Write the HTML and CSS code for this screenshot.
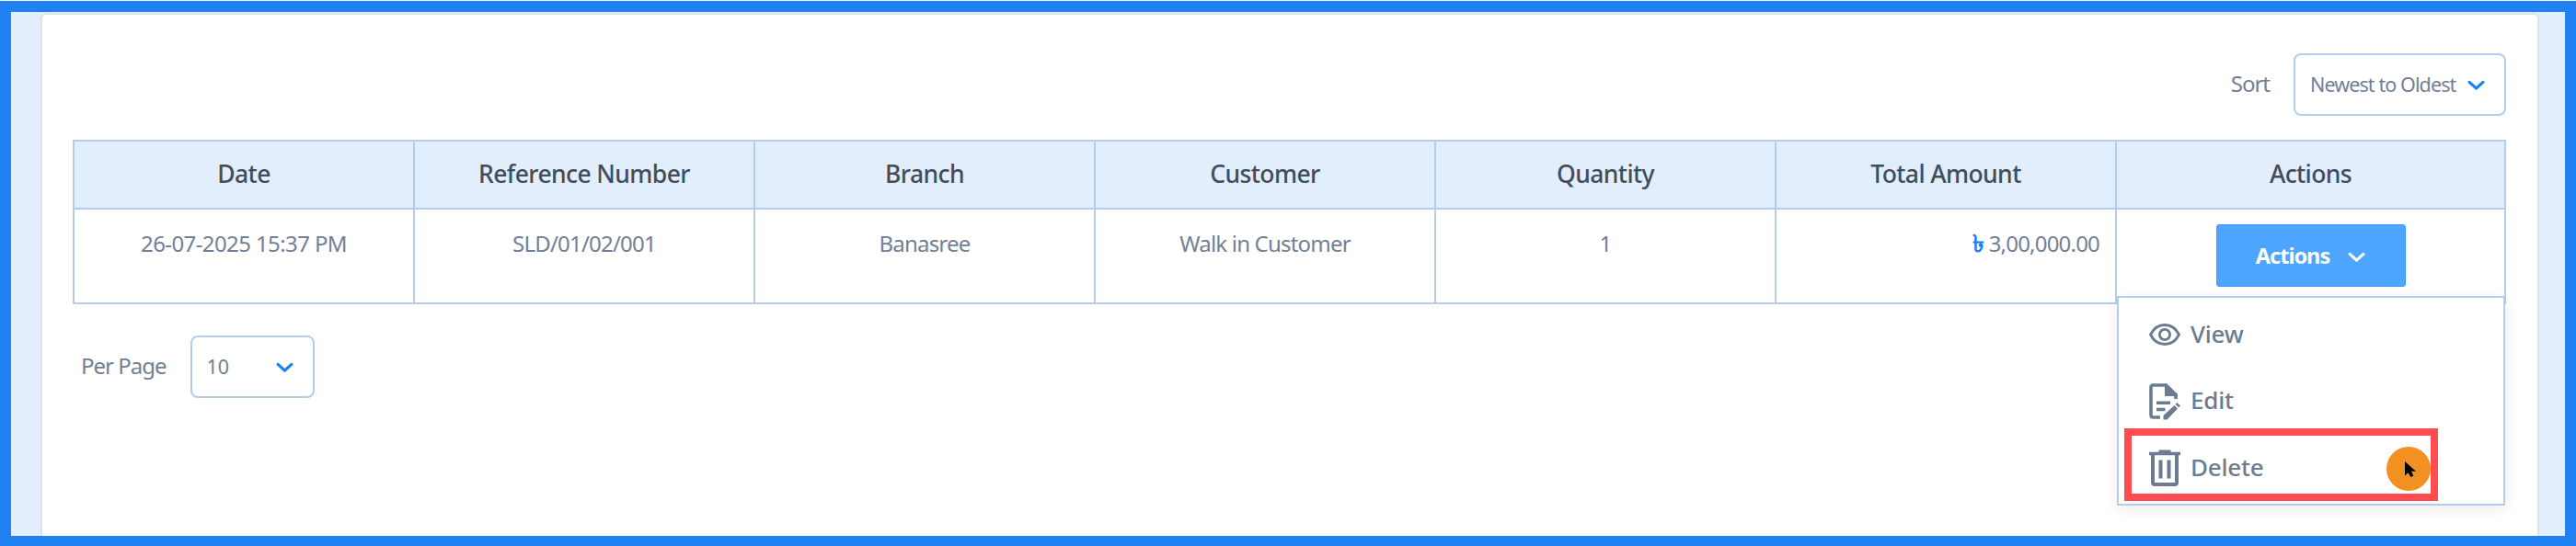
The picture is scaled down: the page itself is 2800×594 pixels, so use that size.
FILE: index.html
```html
<!DOCTYPE html>
<html lang="en">
<head>
    <meta charset="UTF-8">
    <meta name="viewport" content="width=device-width, initial-scale=1.0">
    <title>Sales List</title>
    <link rel="stylesheet" href="styles.css">
</head>
<body>

<div class="frame">
    <div class="card">
        <div class="toolbar">
            <span class="label">Sort</span>
            <div class="select select-sort">
                <span>Newest to Oldest</span>
                <svg class="chevron" viewBox="0 0 18 11"><path d="M2 2l7 6.5L16 2"/></svg>
            </div>
        </div>

        <table class="sales">
            <thead>
                <tr>
                    <th>Date</th>
                    <th>Reference Number</th>
                    <th>Branch</th>
                    <th>Customer</th>
                    <th>Quantity</th>
                    <th>Total Amount</th>
                    <th class="col-actions">Actions</th>
                </tr>
            </thead>
            <tbody>
                <tr>
                    <td class="date">26-07-2025 15:37 PM</td>
                    <td>SLD/01/02/001</td>
                    <td>Banasree</td>
                    <td>Walk in Customer</td>
                    <td>1</td>
                    <td class="amount"><span class="currency">৳</span> 3,00,000.00</td>
                    <td class="actions">
                        <button class="btn" type="button">
                            <span>Actions</span>
                            <svg class="chevron" viewBox="0 0 18 11"><path d="M2 2l7 6.5L16 2"/></svg>
                        </button>
                        <div class="menu">
                            <a class="menu-item" href="#">
                                <svg class="icon" viewBox="0 0 34 40" fill="none" stroke="currentColor">
                                    <path d="M1.5 20C5 13 10.500 9.500 17 9.500S29 13 32.500 20C29 27 23.500 30.500 17 30.500S5 27 1.500 20z" stroke-width="2.800"/>
                                    <circle cx="17" cy="20" r="5.600" stroke-width="2.800"/>
                                </svg>
                                <span>View</span>
                            </a>
                            <a class="menu-item" href="#">
                                <svg class="icon" viewBox="0 0 34 40" fill="none" stroke="currentColor">
                                    <path d="M12 37H4.500Q2 37 2 34.500V4.500Q2 2 4.500 2H18.500L29 12.500V17" stroke-width="3.600"/>
                                    <path d="M17 1h2l12 11.500v1.500H17z" fill="currentColor" stroke="none"/>
                                    <path d="M8 21.300h15M8 28.500h9.500" stroke-width="3.400"/>
                                    <path d="M15.500 39.500v-4.500L27.500 24l3.500 3.500L19.500 39.500zM28.500 22.800l2-1.800L34 24.500l-2 1.800z" fill="currentColor" stroke="none"/>
                                </svg>
                                <span>Edit</span>
                            </a>
                            <a class="menu-item" href="#">
                                <svg class="icon" viewBox="0 0 34 40" fill="none" stroke="currentColor">
                                    <path d="M0 4.500h34" stroke-width="3.400"/>
                                    <path d="M10.500 1.800h13" stroke-width="2.600"/>
                                    <path d="M4 5v31Q4 38 6 38H28Q30 38 30 36V5M12.500 11.500v20M21.500 11.500v20" stroke-width="4"/>
                                </svg>
                                <span>Delete</span>
                            </a>
                            <div class="highlight"></div>
                            <div class="pointer">
                                <svg viewBox="0 0 12 17"><path d="M0 0v15.500l3.600-3.300L6.300 17l3-1.300L7 10.700h5z"/></svg>
                            </div>
                        </div>
                    </td>
                </tr>
            </tbody>
        </table>

        <div class="pager">
            <span class="label">Per Page</span>
            <div class="select select-page">
                <span>10</span>
                <svg class="chevron" viewBox="0 0 18 11"><path d="M2 2l7 6.5L16 2"/></svg>
            </div>
        </div>
    </div>
</div>

</body>
</html>
```

FILE: styles.css
```css
* {
    box-sizing: border-box;
}
body {
    margin: 0;
    padding-top: 1px;
    height: 594px;
    overflow: hidden;
    background-color: #fff;
    font-family: "Noto Sans", "Open Sans", sans-serif;
    color: #718096;
}
/* Blue frame round the page */
.frame {
    height: 593px;
    padding: 1px 28px 0 32px;
    border: 12px solid #2082f2;
    border-bottom-width: 11px;
    background-color: #e2eefc;
}
.card {
    height: 569px;
    padding: 42px 34px 0 33px;
    border: 2px solid #dfe2e6;
    border-bottom: none;
    border-radius: 6px 6px 0 0;
    background-color: #fff;
}
/* Sort and per page controls */
.toolbar {
    display: flex;
    justify-content: flex-end;
    align-items: center;
    gap: 26px;
    margin-bottom: 26px;
}
.pager {
    display: flex;
    align-items: center;
    gap: 26px;
    padding: 34px 0 0 9px;
}
.label {
    padding-bottom: 3px;
    font-size: 24px;
    letter-spacing: -1px;
}
.select {
    display: flex;
    align-items: center;
    justify-content: space-between;
    height: 68px;
    padding: 0 21px 2px 16px;
    border: 2px solid #b5cde8;
    border-radius: 8px;
    font-size: 21.5px;
}
.select-sort {
    width: 231px;
    letter-spacing: -0.9px;
}
.select-page {
    width: 135px;
}
.chevron {
    width: 19px;
    height: 12px;
    margin-top: 3px;
    fill: none;
    stroke: #1a80f8;
    stroke-width: 3;
    stroke-linecap: round;
    stroke-linejoin: round;
}
/* Sales table */
.sales {
    width: 2645px;
    table-layout: fixed;
    border-collapse: collapse;
}
.sales th,
.sales td {
    border: 2px solid #b5cde8;
    text-align: center;
}
.sales th {
    height: 74px;
    padding: 0 0 3px;
    background-color: #e2eefc;
    color: #414d5c;
    font-size: 26.5px;
    font-weight: 550;
    letter-spacing: -0.6px;
}
.sales td {
    height: 103px;
    padding: 20px 17px 0;
    font-size: 24px;
    line-height: 34px;
    letter-spacing: -0.8px;
    vertical-align: top;
}
.sales .date {
    letter-spacing: -0.6px;
}
.sales .col-actions {
    width: 423px;
}
.sales .amount {
    text-align: right;
}
.currency {
    color: #1a80f8;
    font-size: 26px;
    font-weight: 600;
    line-height: 1;
}
.sales .actions {
    position: relative;
    padding: 16px 0 0;
}
.btn {
    display: flex;
    align-items: center;
    justify-content: center;
    gap: 20px;
    width: 206px;
    height: 68px;
    margin: 0 auto;
    padding: 0;
    border: 1px solid #3b9cff;
    border-radius: 3px;
    background-color: #4da5ff;
    color: #fff;
    font-family: inherit;
    font-size: 23.5px;
    font-weight: 700;
    letter-spacing: -1px;
}
.btn .chevron {
    stroke: #fff;
}
/* Dropdown opened under the button */
.menu {
    position: absolute;
    top: 94px;
    left: 0;
    width: 422px;
    height: 228px;
    padding: 4px 33px;
    border: 2px solid #b5cde8;
    background-color: #fff;
    box-shadow: 0 4px 16px rgba(0, 0, 0, 0.08);
}
.menu-item {
    display: flex;
    align-items: center;
    gap: 11px;
    height: 72.5px;
    color: #6b7c91;
    font-size: 26px;
    font-weight: 550;
    letter-spacing: -0.2px;
    text-decoration: none;
}
.menu-item span {
    padding-bottom: 3px;
}
.icon {
    width: 34px;
    height: 40px;
}
.highlight {
    position: absolute;
    top: 142px;
    left: 6px;
    width: 341px;
    height: 79px;
    border: 8px solid #ff4d52;
}
.pointer {
    position: absolute;
    top: 162px;
    left: 291px;
    width: 48px;
    height: 48px;
    border-radius: 50%;
    background-color: #f29122;
}
.pointer svg {
    display: block;
    width: 12px;
    height: 17px;
    margin: 16px 0 0 20px;
}
```
